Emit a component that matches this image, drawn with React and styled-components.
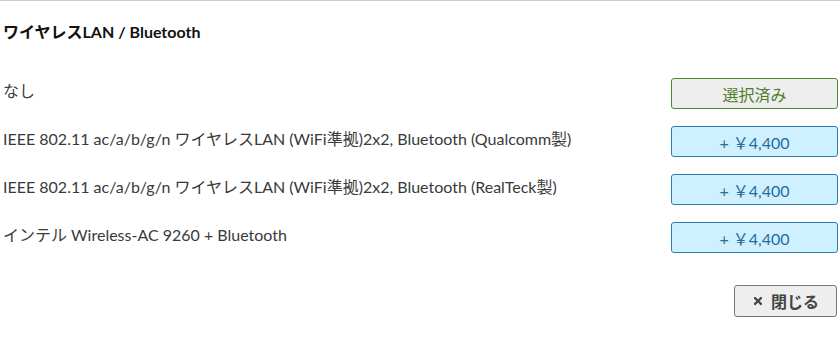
import styled, { createGlobalStyle } from "styled-components"
import { FaTimes } from "react-icons/fa"

const GlobalStyle = createGlobalStyle`
  body {
    margin: 0;
    background: #fff;
    font-family: Lato, "Noto Sans CJK JP", sans-serif;
    color: #333;
  }
`

const Panel = styled.div`
  border-top: 1px solid #ccc;
  padding: 0 2px 0 3px;
  width: 840px;
  box-sizing: border-box;
`

const Title = styled.h3`
  margin: 0;
  padding: 20px 0 0;
  height: 77px;
  box-sizing: border-box;
  font-size: 16px;
  line-height: 22px;
  font-weight: bold;
  color: #111;
`

const List = styled.div`
  display: flex;
  flex-direction: column;
  gap: 17px;
`

const Row = styled.div`
  display: flex;
  justify-content: space-between;
  align-items: flex-start;
`

const Label = styled.div`
  font-size: 16px;
  line-height: 26px;
  color: #3a3a3a;
`

const Choice = styled.button`
  width: 167px;
  height: 31px;
  box-sizing: border-box;
  border-radius: 3px;
  font-family: inherit;
  font-size: 16px;
  padding: 0;
  cursor: pointer;
  border: 1px solid ${p => (p.$selected ? "#4c8a2e" : "#2a7db5")};
  background: ${p => (p.$selected ? "#eeeeee" : "#cff0fe")};
  color: ${p => (p.$selected ? "#4f7f2a" : "#236e9f")};
`

const Footer = styled.div`
  display: flex;
  justify-content: flex-end;
  padding: 32px 1px 0 0;
`

const CloseButton = styled.button`
  display: flex;
  align-items: center;
  justify-content: center;
  gap: 7px;
  width: 103px;
  height: 32px;
  box-sizing: border-box;
  border: 1px solid #777;
  border-radius: 3px;
  background: #eee;
  color: #444;
  font-family: inherit;
  font-size: 16px;
  font-weight: bold;
  padding: 0;
  cursor: pointer;

  svg {
    width: 12px;
    height: 12px;
  }
`

const options = [
  { label: "なし", selected: true },
  { label: "IEEE 802.11 ac/a/b/g/n ワイヤレスLAN (WiFi準拠)2x2, Bluetooth (Qualcomm製)" },
  { label: "IEEE 802.11 ac/a/b/g/n ワイヤレスLAN (WiFi準拠)2x2, Bluetooth (RealTeck製)" },
  { label: "インテル Wireless-AC 9260 + Bluetooth" },
]

export default function App() {
  return (
    <>
      <GlobalStyle />
      <Panel>
        <Title>ワイヤレスLAN / Bluetooth</Title>
        <List>
          {options.map(o => (
            <Row key={o.label}>
              <Label>{o.label}</Label>
              <Choice $selected={o.selected}>{o.selected ? "選択済み" : "+ ￥4,400"}</Choice>
            </Row>
          ))}
        </List>
        <Footer>
          <CloseButton>
            <FaTimes />
            閉じる
          </CloseButton>
        </Footer>
      </Panel>
    </>
  )
}
